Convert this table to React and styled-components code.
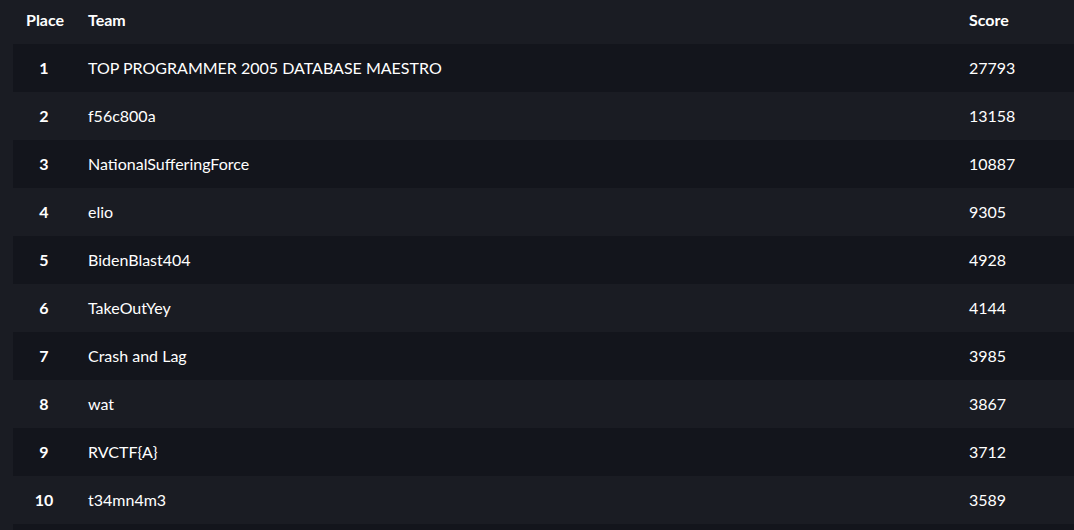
import React from "react";
import styled, { createGlobalStyle } from "styled-components";

const GlobalStyle = createGlobalStyle`
  html, body {
    margin: 0;
    padding: 0;
    background: #1a1c23;
    color: #ffffff;
    font-family: Lato, "Open Sans", sans-serif;
    overflow: hidden;
  }
`;

const teams = [
  ["TOP PROGRAMMER 2005 DATABASE MAESTRO", 27793],
  ["f56c800a", 13158],
  ["NationalSufferingForce", 10887],
  ["elio", 9305],
  ["BidenBlast404", 4928],
  ["TakeOutYey", 4144],
  ["Crash and Lag", 3985],
  ["wat", 3867],
  ["RVCTF{A}", 3712],
  ["t34mn4m3", 3589],
  ["", 0],
];

const Wrap = styled.div`
  padding-left: 13px;
  height: 530px;
  overflow: hidden;
`;

const Table = styled.table`
  width: 100%;
  border-collapse: collapse;
  table-layout: fixed;
`;

const Head = styled.th`
  height: 44px;
  padding: 0 13px 6px;
  font-size: 16px;
  font-weight: 700;
  text-align: ${(p) => (p.$center ? "center" : "left")};
  width: ${(p) => p.$w || "auto"};
  box-sizing: border-box;
`;

const Row = styled.tr`
  height: 48px;
  background: ${(p) => (p.$odd ? "#13151c" : "transparent")};
`;

const Cell = styled.td`
  padding: 0 13px 2px;
  font-size: 16px;
  font-weight: ${(p) => (p.$bold ? 700 : 400)};
  text-align: ${(p) => (p.$center ? "center" : "left")};
  white-space: nowrap;
`;

export default function App() {
  return (
    <>
      <GlobalStyle />
      <Wrap>
        <Table>
          <thead>
            <tr>
              <Head $center $w="62px">Place</Head>
              <Head>Team</Head>
              <Head $w="118px">Score</Head>
            </tr>
          </thead>
          <tbody>
            {teams.map(([name, score], i) => (
              <Row key={i} $odd={i % 2 === 0}>
                <Cell $center $bold>{name ? i + 1 : ""}</Cell>
                <Cell>{name}</Cell>
                <Cell>{name ? score : ""}</Cell>
              </Row>
            ))}
          </tbody>
        </Table>
      </Wrap>
    </>
  );
}
